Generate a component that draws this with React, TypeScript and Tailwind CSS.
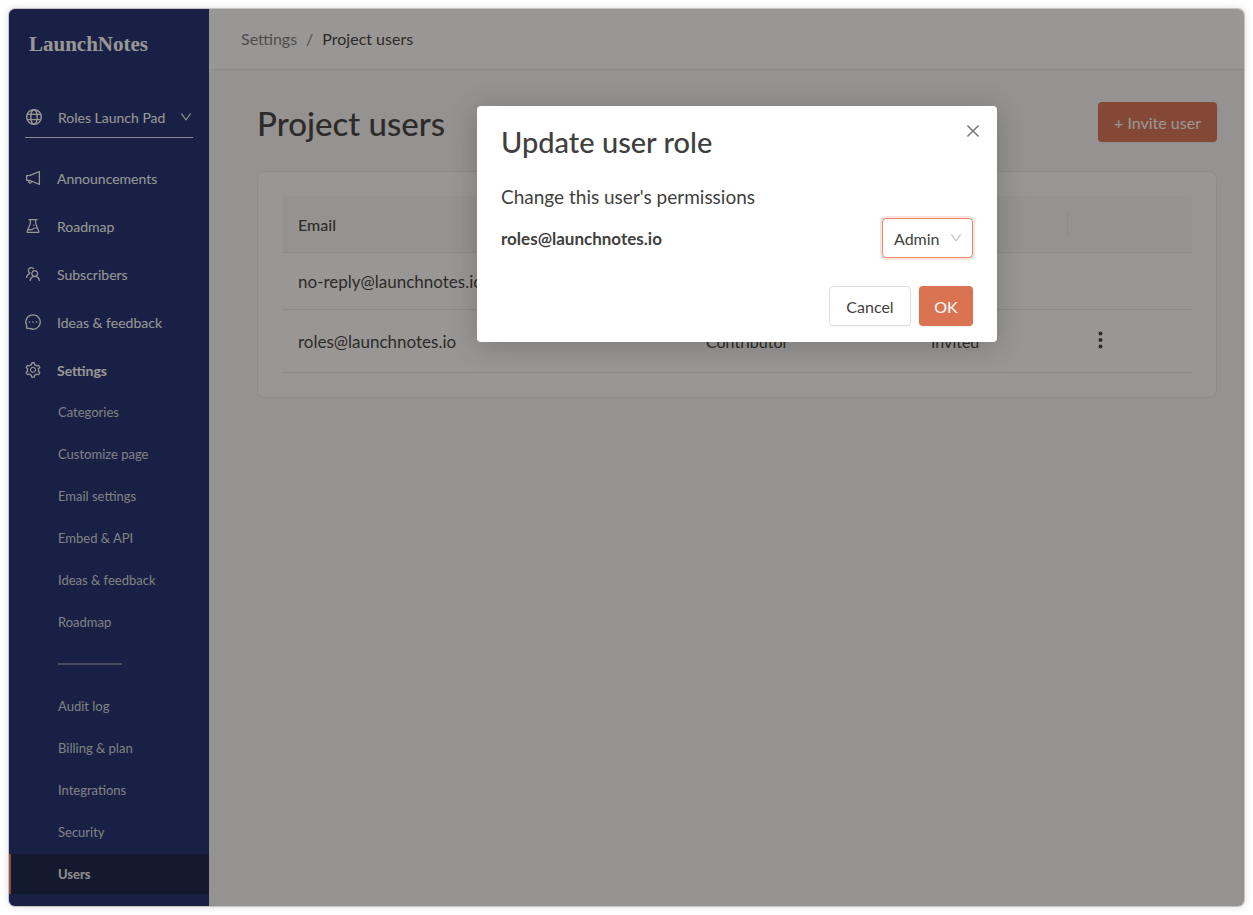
import React, { useState } from 'react';
import {
  AiOutlineClose,
  AiOutlineDown,
  AiOutlineExperiment,
  AiOutlineMessage,
  AiOutlineNotification,
  AiOutlineSetting,
  AiOutlineTeam,
} from 'react-icons/ai';

interface ProjectUser {
  email: string;
  role: string;
  status: string;
  editable: boolean;
}

const mainLinks = [
  { label: 'Announcements', icon: AiOutlineNotification, active: false },
  { label: 'Roadmap', icon: AiOutlineExperiment, active: false },
  { label: 'Subscribers', icon: AiOutlineTeam, active: false },
  { label: 'Ideas & feedback', icon: AiOutlineMessage, active: false },
  { label: 'Settings', icon: AiOutlineSetting, active: true },
];

const projectLinks = ['Categories', 'Customize page', 'Email settings', 'Embed & API', 'Ideas & feedback', 'Roadmap'];
const accountLinks = ['Audit log', 'Billing & plan', 'Integrations', 'Security', 'Users'];

const users: ProjectUser[] = [
  { email: 'no-reply@launchnotes.io', role: 'Admin', status: '', editable: false },
  { email: 'roles@launchnotes.io', role: 'Contributor', status: 'Invited', editable: true },
];

function GlobeIcon() {
  return (
    <svg viewBox="0 0 18 18" className="h-[18px] w-[18px]" fill="none" stroke="currentColor" strokeWidth="1.4">
      <circle cx="9" cy="9" r="7.3" />
      <ellipse cx="9" cy="9" rx="3.2" ry="7.3" />
      <path d="M2.3 6.4h13.4M2.3 11.6h13.4" />
    </svg>
  );
}

function DotsIcon() {
  return (
    <svg viewBox="0 0 24 24" className="h-6 w-6" fill="currentColor">
      <circle cx="12.5" cy="4.5" r="2" />
      <circle cx="12.5" cy="11" r="2" />
      <circle cx="12.5" cy="17.5" r="2" />
    </svg>
  );
}

function SubLink({ label, active }: { label: string; active?: boolean }) {
  return (
    <a
      href="#"
      className={`flex h-10 items-center border-l-2 pt-0.5 pl-[47px] text-[13px] ${
        active ? 'border-[#e58a63] bg-[#212a4f] font-bold text-[#f2efec]' : 'border-transparent text-[#d6d7dc]'
      }`}
    >
      {label}
    </a>
  );
}

function Sidebar() {
  return (
    <aside className="w-[200px] shrink-0 bg-[#283773] pb-3 text-[#fffcf8]">
      <div className="flex h-[70px] items-center pt-0.5 pl-5 font-['Liberation_Serif',serif] text-[21px] font-bold">
        LaunchNotes
      </div>

      <button className="mx-4 mt-[18px] flex h-[41px] w-[168px] items-center border-b border-[#e4e4ea] text-[14px]">
        <GlobeIcon />
        <span className="ml-[15px] flex-1 text-left">Roles Launch Pad</span>
        <AiOutlineDown className="h-[14px] w-[14px]" />
      </button>

      <nav className="mt-5">
        <div className="flex flex-col gap-2">
          {mainLinks.map(({ label, icon: Icon, active }) => (
            <a
              key={label}
              href="#"
              className={`flex h-10 items-center gap-[15px] pl-[15px] text-[14px] ${active ? 'font-bold' : ''}`}
            >
              <Icon className="h-[18px] w-[18px]" />
              {label}
            </a>
          ))}
        </div>
        <div className="mt-0.5 flex flex-col gap-0.5">
          {projectLinks.map((label) => (
            <SubLink key={label} label={label} />
          ))}
          <div className="flex h-10 items-center pl-[49px]">
            <hr className="w-16 border-t-2 border-[#7a809e]" />
          </div>
          {accountLinks.map((label) => (
            <SubLink key={label} label={label} active={label === 'Users'} />
          ))}
        </div>
      </nav>
    </aside>
  );
}

function UsersTable() {
  return (
    <div className="mt-[29px] rounded-lg border border-[#ece9e5] bg-[#fffcf8] p-6">
      <table className="w-full table-fixed text-left text-[16px] text-[#4b4946]">
        <colgroup>
          <col />
          <col className="w-[225px]" />
          <col className="w-[152px]" />
          <col className="w-[125px]" />
        </colgroup>
        <thead>
          <tr className="h-14 border-b border-[#ebe8e4] bg-[#f8f5f2]">
            <th className="rounded-tl px-4 pt-0.5 font-medium">Email</th>
            <th className="px-4 pt-0.5 font-medium">Role</th>
            <th className="px-4 pt-0.5 font-medium">Status</th>
            <th aria-label="Actions" className="rounded-tr">
              <div className="h-[26px] border-l border-[#ebe8e4]"></div>
            </th>
          </tr>
        </thead>
        <tbody>
          {users.map((user) => (
            <tr
              key={user.email}
              className={`border-b border-[#ebe8e4] ${user.editable ? 'h-[63px]' : 'h-[57px]'}`}
            >
              <td className="px-4 pt-0.5 text-[17px]">{user.email}</td>
              <td className="px-4 pt-0.5">{user.role}</td>
              <td className="px-4 pt-0.5">{user.status}</td>
              <td className="px-[21px]">
                {user.editable && (
                  <button aria-label="More actions" className="flex">
                    <DotsIcon />
                  </button>
                )}
              </td>
            </tr>
          ))}
        </tbody>
      </table>
    </div>
  );
}

function UpdateRoleDialog({ onClose }: { onClose: () => void }) {
  const [role, setRole] = useState('Admin');

  return (
    <div className="absolute inset-0 flex items-start justify-center bg-black/40 pt-[97px] pl-[221px]">
      <div
        role="dialog"
        aria-labelledby="dialog-title"
        className="relative w-[520px] rounded bg-white px-6 pt-[18px] pb-4 text-[#403f3d] shadow-[0_4px_30px_rgba(0,0,0,0.2)]"
      >
        <h2 id="dialog-title" className="text-[29px] leading-9 font-medium">
          Update user role
        </h2>
        <button aria-label="Close" onClick={onClose} className="absolute top-4 right-[15px] p-0 text-[#77736f]">
          <AiOutlineClose className="h-[18px] w-[18px]" />
        </button>

        <p className="mt-[25px] text-[19px] leading-6">Change this user's permissions</p>
        <div className="mt-[9px] flex items-center justify-between">
          <label htmlFor="role" className="pt-0.5 text-[17px] font-bold">
            roles@launchnotes.io
          </label>
          <div className="relative">
            <select
              id="role"
              value={role}
              onChange={(e) => setRole(e.target.value)}
              className="h-10 w-[91px] appearance-none rounded border border-[#e58a6c] bg-white pt-0.5 pl-[11px] text-[16px] ring-2 ring-[#fae3dc] outline-none"
            >
              <option>Admin</option>
              <option>Editor</option>
              <option>Contributor</option>
            </select>
            <AiOutlineDown className="pointer-events-none absolute top-[13px] right-[10px] h-[14px] w-[14px] text-[#bfbfbf]" />
          </div>
        </div>

        <div className="mt-7 flex justify-end gap-2 text-[16px]">
          <button onClick={onClose} className="h-10 w-[82px] rounded border border-[#dedede] bg-white pt-0.5 shadow-xs">
            Cancel
          </button>
          <button onClick={onClose} className="h-10 w-[54px] rounded bg-[#d97352] pt-0.5 text-white shadow-xs">
            OK
          </button>
        </div>
      </div>
    </div>
  );
}

export default function App() {
  const [dialogOpen, setDialogOpen] = useState(true);

  return (
    <div className="min-h-screen bg-white p-[9px] font-[Lato,sans-serif]">
      <div className="relative flex overflow-hidden rounded-md shadow-[0_0_0_1px_#c4c4c4,0_0_10px_rgba(0,0,0,0.15)]">
        <Sidebar />

        <div className="flex-1 bg-[#f8f5f2]">
          <header className="flex h-[61px] items-center gap-[9px] border-b border-[#ebe8e4] bg-[#fffcf8] pl-8 text-[16px]">
            <a href="#" className="text-[#84817d]">
              Settings
            </a>
            <span className="text-[#84817d]">/</span>
            <span className="text-[#4b4946]">Project users</span>
          </header>

          <main className="pt-8 pr-[27px] pl-12">
            <div className="flex h-10 items-center justify-between">
              <h1 className="pt-0.5 text-[33px] leading-10 font-medium text-[#4b4946]">Project users</h1>
              <button
                onClick={() => setDialogOpen(true)}
                className="h-10 w-[119px] rounded bg-[#dc7b5a] pt-0.5 text-[16px] text-[#fffcf8] shadow-xs"
              >
                + Invite user
              </button>
            </div>
            <UsersTable />
          </main>
        </div>

        {dialogOpen && <UpdateRoleDialog onClose={() => setDialogOpen(false)} />}
      </div>
    </div>
  );
}
